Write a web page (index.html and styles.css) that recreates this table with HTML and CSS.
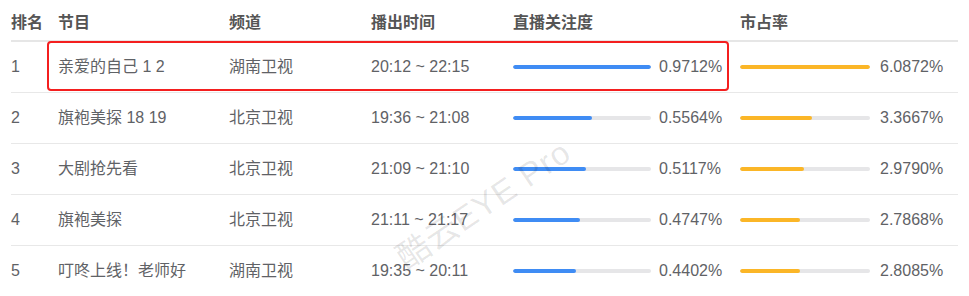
FILE: index.html
```html
<!DOCTYPE html>
<html lang="zh-CN">
<head>
<meta charset="utf-8">
<title>直播关注度排名</title>
<link rel="stylesheet" href="styles.css">
</head>
<body>
<div class="board">
  <div class="row head">
    <div class="cell">排名</div>
    <div class="cell">节目</div>
    <div class="cell">频道</div>
    <div class="cell">播出时间</div>
    <div class="cell">直播关注度</div>
    <div class="cell">市占率</div>
  </div>

  <div class="row">
    <div class="cell">1</div>
    <div class="cell">亲爱的自己 1 2</div>
    <div class="cell">湖南卫视</div>
    <div class="cell">20:12 ~ 22:15</div>
    <div class="cell metric"><span class="track blue"><span class="fill" style="width:100%"></span></span><span class="val">0.9712%</span></div>
    <div class="cell metric"><span class="track orange"><span class="fill" style="width:100%"></span></span><span class="val">6.0872%</span></div>
  </div>

  <div class="row">
    <div class="cell">2</div>
    <div class="cell">旗袍美探 18 19</div>
    <div class="cell">北京卫视</div>
    <div class="cell">19:36 ~ 21:08</div>
    <div class="cell metric"><span class="track blue"><span class="fill" style="width:57.3%"></span></span><span class="val">0.5564%</span></div>
    <div class="cell metric"><span class="track orange"><span class="fill" style="width:55.3%"></span></span><span class="val">3.3667%</span></div>
  </div>

  <div class="row">
    <div class="cell">3</div>
    <div class="cell">大剧抢先看</div>
    <div class="cell">北京卫视</div>
    <div class="cell">21:09 ~ 21:10</div>
    <div class="cell metric"><span class="track blue"><span class="fill" style="width:52.7%"></span></span><span class="val">0.5117%</span></div>
    <div class="cell metric"><span class="track orange"><span class="fill" style="width:48.9%"></span></span><span class="val">2.9790%</span></div>
  </div>

  <div class="row">
    <div class="cell">4</div>
    <div class="cell">旗袍美探</div>
    <div class="cell">北京卫视</div>
    <div class="cell">21:11 ~ 21:17</div>
    <div class="cell metric"><span class="track blue"><span class="fill" style="width:48.9%"></span></span><span class="val">0.4747%</span></div>
    <div class="cell metric"><span class="track orange"><span class="fill" style="width:45.8%"></span></span><span class="val">2.7868%</span></div>
  </div>

  <div class="row last">
    <div class="cell">5</div>
    <div class="cell">叮咚上线！老师好</div>
    <div class="cell">湖南卫视</div>
    <div class="cell">19:35 ~ 20:11</div>
    <div class="cell metric"><span class="track blue"><span class="fill" style="width:45.3%"></span></span><span class="val">0.4402%</span></div>
    <div class="cell metric"><span class="track orange"><span class="fill" style="width:46.1%"></span></span><span class="val">2.8085%</span></div>
  </div>

  <div class="highlight"></div>
  <div class="watermark">酷云EYE Pro</div>
</div>
</body>
</html>
```

FILE: styles.css
```css
html, body {
  margin: 0;
  padding: 0;
  background: #ffffff;
}

body {
  font-family: "Liberation Sans", Arial, "Noto Sans CJK SC", sans-serif;
  font-size: 16px;
  color: #5f6266;
  overflow: hidden;
}

.board {
  position: relative;
  margin-left: 11px;
  width: 947px;
}

.row {
  display: grid;
  grid-template-columns: 47px 171px 142px 142px 227px 218px;
  align-items: center;
  height: 50px;
  border-bottom: 1px solid #e8e8e8;
}

.row.last {
  border-bottom: none;
}

.row.head {
  height: 34px;
  padding-top: 6px;
  border-bottom: 2px solid #e6e6e6;
  font-weight: bold;
  color: #555555;
}

.cell {
  white-space: nowrap;
  line-height: 20px;
}

.metric {
  display: flex;
  align-items: center;
}

.track {
  display: block;
  height: 4px;
  border-radius: 2px;
  background: #e6e6e8;
  overflow: hidden;
}

.track.blue {
  width: 138px;
  margin-right: 8px;
}

.track.orange {
  width: 130px;
  margin-right: 10px;
}

.fill {
  display: block;
  height: 100%;
  border-radius: 2px;
}

.blue .fill {
  background: #3f8cf4;
}

.orange .fill {
  background: #fbb627;
}

.highlight {
  position: absolute;
  left: 36px;
  top: 41px;
  width: 678px;
  height: 46px;
  border: 2px solid #f41f1f;
  border-radius: 4px;
  pointer-events: none;
}

.watermark {
  position: absolute;
  left: 372px;
  top: 186px;
  font-size: 33px;
  line-height: 38px;
  color: rgba(0, 0, 0, 0.1);
  transform: rotate(-34deg);
  white-space: nowrap;
  letter-spacing: 1px;
  pointer-events: none;
}
```
